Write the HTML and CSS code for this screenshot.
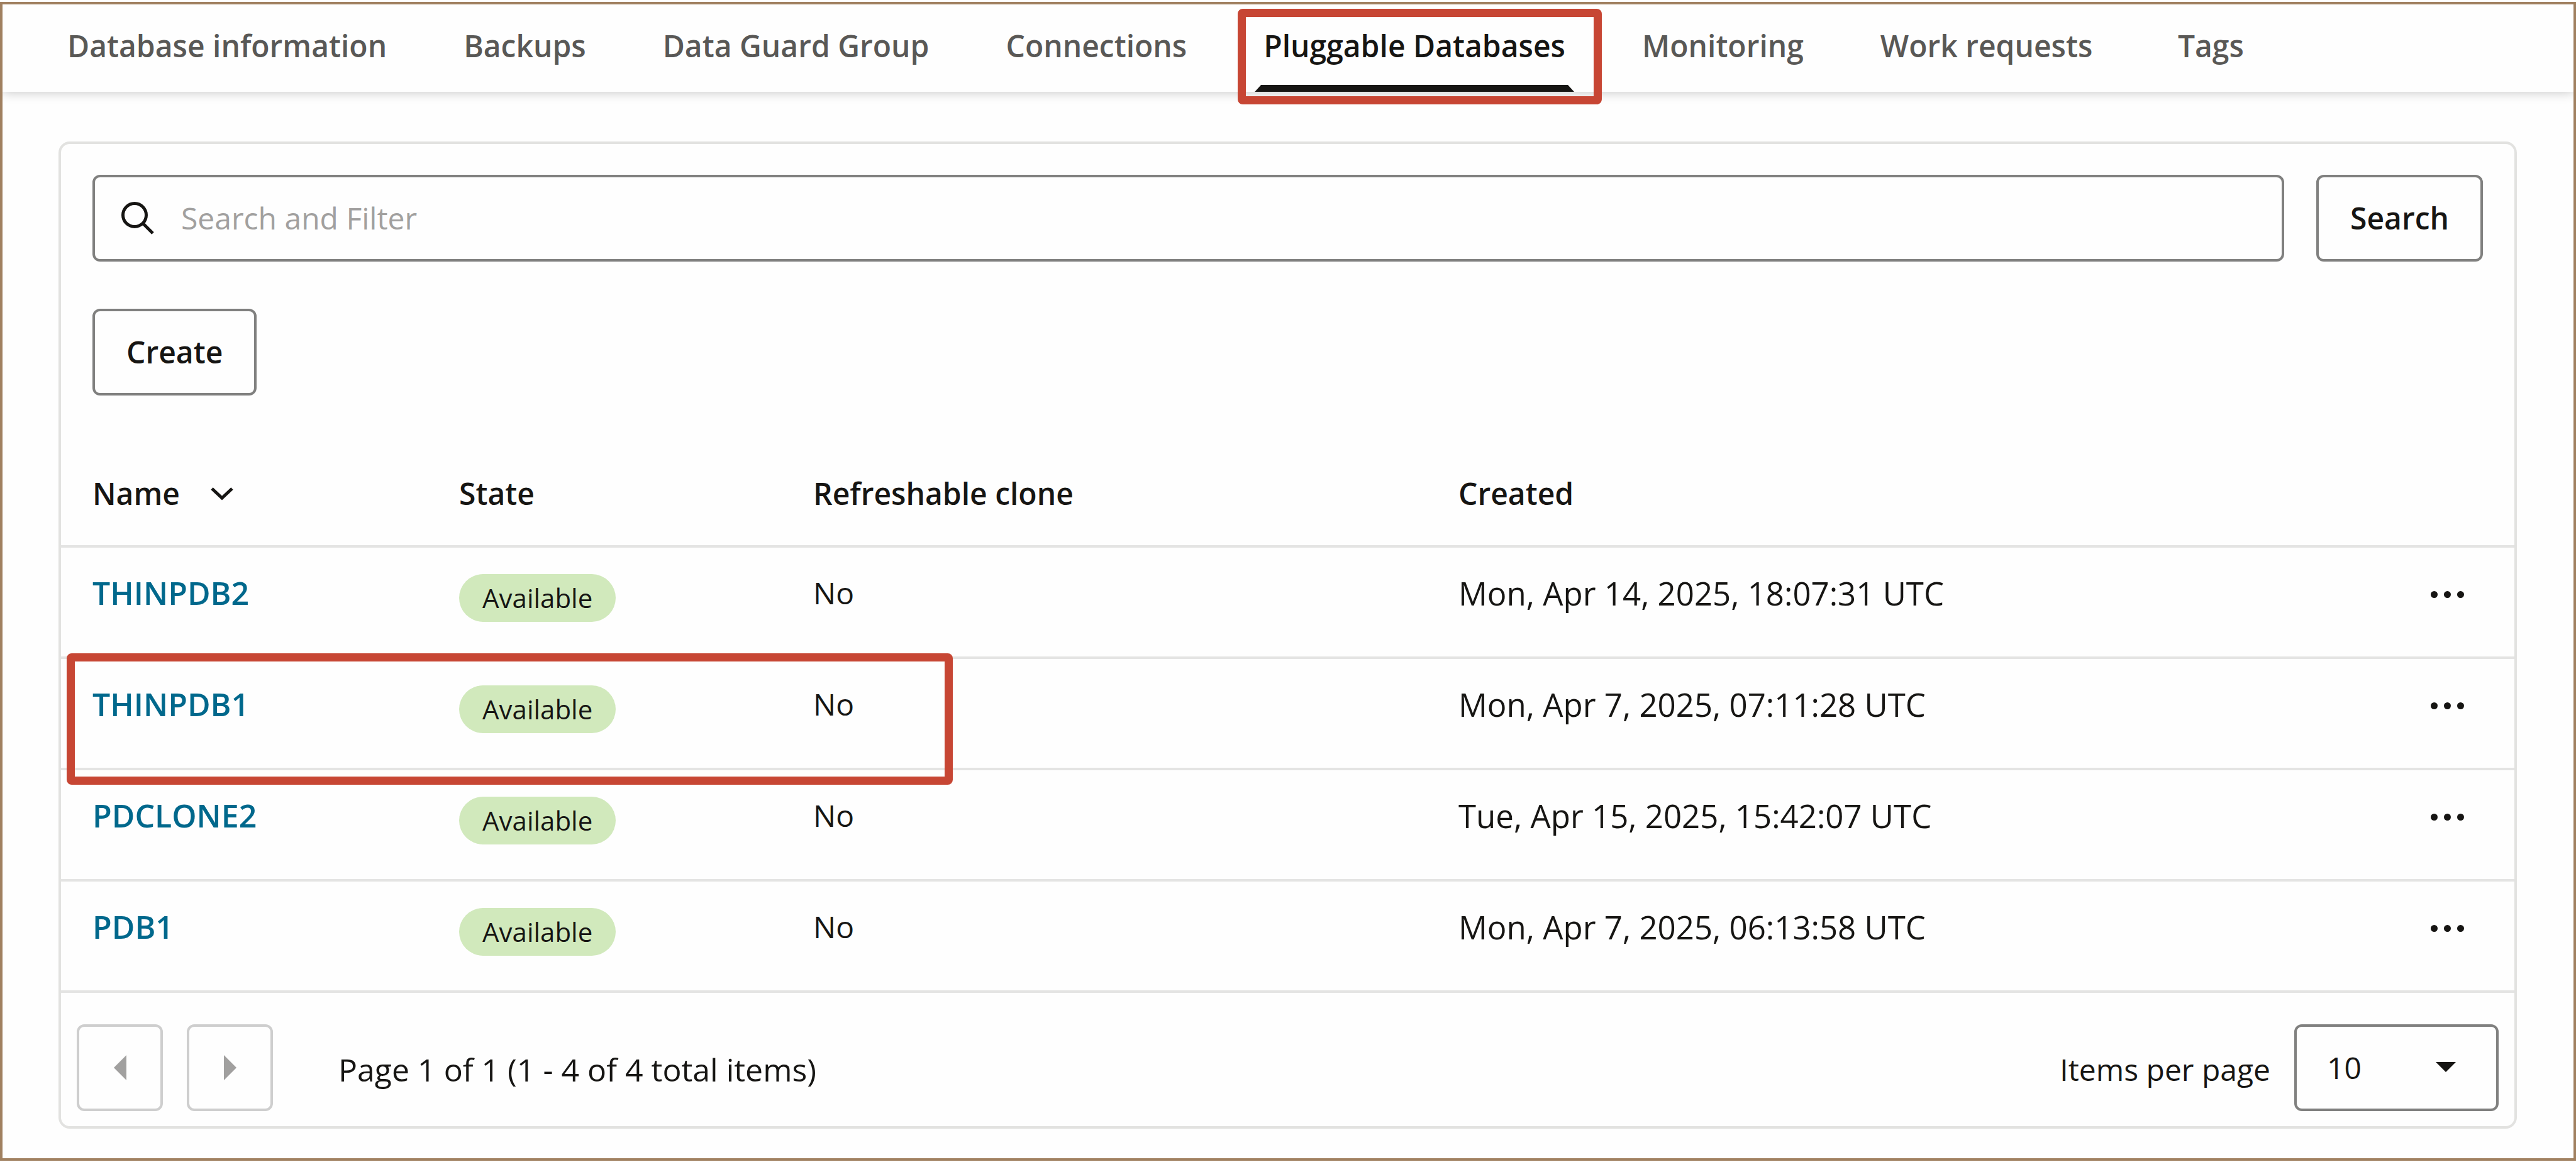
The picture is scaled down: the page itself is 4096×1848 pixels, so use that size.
FILE: index.html
```html
<!DOCTYPE html>
<html lang="en">
<head>
<meta charset="utf-8">
<title>Pluggable Databases</title>
<link rel="stylesheet" href="styles.css">
</head>
<body>
<div class="frame">
  <nav class="tabs" aria-label="Database sections">
    <a class="tab" href="#info">Database information</a>
    <a class="tab" href="#backups">Backups</a>
    <a class="tab" href="#guard">Data Guard Group</a>
    <a class="tab" href="#connections">Connections</a>
    <a class="tab tab-active" href="#pdbs" aria-current="page">Pluggable Databases</a>
    <a class="tab" href="#monitoring">Monitoring</a>
    <a class="tab" href="#requests">Work requests</a>
    <a class="tab" href="#tags">Tags</a>
  </nav>
  <main class="panel">
    <form class="search-row">
      <label class="search-box">
        <svg class="search-icon" viewBox="0 0 52 52" aria-hidden="true"><circle cx="21" cy="21" r="18.500" /><path d="M34 34 50 50" /></svg>
        <input class="search-input" type="text" placeholder="Search and Filter" aria-label="Search and Filter">
      </label>
      <button class="button" type="button">Search</button>
    </form>
    <div class="toolbar"><button class="button" type="button">Create</button></div>
    <table class="grid">
      <colgroup><col class="col-name"><col class="col-state"><col class="col-clone"><col class="col-created"><col class="col-actions"></colgroup>
      <thead>
        <tr>
          <th scope="col"><span class="sortable">Name <svg class="sort-icon" viewBox="0 0 36 22" aria-hidden="true"><path d="M2 3 18 18 34 3" /></svg></span></th>
          <th scope="col">State</th>
          <th scope="col">Refreshable clone</th>
          <th scope="col">Created</th>
          <td></td>
        </tr>
      </thead>
      <tbody>
        <tr>
          <td><a class="name" href="#thinpdb2">THINPDB2</a></td>
          <td><span class="badge">Available</span></td>
          <td>No</td>
          <td class="date">Mon, Apr 14, 2025, 18:07:31 UTC</td>
          <td><button class="more" type="button" aria-label="Actions"><i></i><i></i><i></i></button></td>
        </tr>
        <tr>
          <td class="marked"><a class="name" href="#thinpdb1">THINPDB1</a></td>
          <td><span class="badge">Available</span></td>
          <td>No</td>
          <td class="date">Mon, Apr 7, 2025, 07:11:28 UTC</td>
          <td><button class="more" type="button" aria-label="Actions"><i></i><i></i><i></i></button></td>
        </tr>
        <tr>
          <td><a class="name" href="#pdclone2">PDCLONE2</a></td>
          <td><span class="badge">Available</span></td>
          <td>No</td>
          <td class="date">Tue, Apr 15, 2025, 15:42:07 UTC</td>
          <td><button class="more" type="button" aria-label="Actions"><i></i><i></i><i></i></button></td>
        </tr>
        <tr>
          <td><a class="name" href="#pdb1">PDB1</a></td>
          <td><span class="badge">Available</span></td>
          <td>No</td>
          <td class="date">Mon, Apr 7, 2025, 06:13:58 UTC</td>
          <td><button class="more" type="button" aria-label="Actions"><i></i><i></i><i></i></button></td>
        </tr>
      </tbody>
    </table>
    <footer class="pager">
      <button class="page-button" type="button" aria-label="Previous page" disabled><svg class="page-icon" viewBox="0 0 20 40" aria-hidden="true"><path d="M20 0V40L0 20Z" /></svg></button>
      <button class="page-button" type="button" aria-label="Next page" disabled><svg class="page-icon" viewBox="0 0 20 40" aria-hidden="true"><path d="M0 0V40L20 20Z" /></svg></button>
      <p class="page-status">Page 1 of 1 (1 - 4 of 4 total items)</p>
      <label class="page-label" for="page-size">Items per page</label>
      <div class="select-box">
        <select class="page-size" id="page-size"><option>10</option><option>25</option><option>50</option></select>
        <svg class="select-icon" viewBox="0 0 32 16" aria-hidden="true"><path d="M0 0H32L16 16Z" /></svg>
      </div>
    </footer>
  </main>
</div>
</body>
</html>
```
FILE: styles.css
```css
*,
*::before,
*::after { box-sizing: border-box; }

body {
  margin: 0;
  padding: 3px 0 2px;
  background: #fff;
  color: #161513;
  font: 48px/68px "Open Sans", "Noto Sans", sans-serif;
}

.frame {
  min-height: calc(100vh - 5px);
  padding-bottom: 47px;
  border: 4px solid #a08060;
  background: #fefefe;
}

.tabs {
  display: flex;
  gap: 122px;
  height: 139px;
  padding: 32px 103px 0;
  box-shadow: 0 2px 16px rgba(0, 0, 0, 0.2);
  clip-path: inset(0 0 -24px 0);
}

.tab {
  position: relative;
  min-width: 132px;
  color: #595856;
  font-weight: 600;
  text-align: center;
  text-decoration: none;
  white-space: nowrap;
}

.tab-active { color: #161513; }

.tab-active::before {
  content: "";
  position: absolute;
  inset: 96px -14px auto;
  height: 11px;
  background: #161513;
  clip-path: polygon(10px 0, calc(100% - 10px) 0, 100% 100%, 0 100%);
}

.tab-active::after {
  content: "";
  position: absolute;
  inset: -25px -58px auto -41px;
  height: 152px;
  border: 13px solid #c74634;
  border-radius: 8px;
}

.panel {
  margin: 79px 90px 0 89px;
  border: 4px solid #e2e2e0;
  border-radius: 18px;
}

.search-row {
  display: flex;
  gap: 51px;
  padding: 49px 50px 0;
}

.search-box {
  display: flex;
  flex: 1;
  align-items: center;
  gap: 43px;
  height: 138px;
  padding: 0 42px;
  border: 4px solid #80807f;
  border-radius: 12px;
}

.search-icon {
  width: 52px;
  height: 52px;
  fill: none;
  stroke: #161513;
  stroke-width: 5;
}

.search-input {
  flex: 1;
  padding: 0;
  border: 0;
  outline: 0;
  background: none;
  color: inherit;
  font: inherit;
}

.search-input::placeholder { color: #a1a09f; opacity: 1; }

.button {
  height: 138px;
  padding: 0 50px;
  border: 4px solid #80807f;
  border-radius: 12px;
  background: none;
  color: inherit;
  font: inherit;
  font-weight: 600;
}

.toolbar { padding: 75px 50px 0; }

.grid {
  width: 100%;
  margin-top: 65px;
  border-collapse: separate;
  border-spacing: 0;
  table-layout: fixed;
}

.col-name { width: 633px; }
.col-state { width: 563px; }
.col-clone { width: 1026px; }
.col-actions { width: 300px; }

.grid th,
.grid td {
  height: 177px;
  padding: 38px 0 0;
  border-bottom: 4px solid #e4e4e3;
  text-align: left;
  vertical-align: top;
}

.grid tr > :first-child { padding-left: 50px; }
.grid th { font-weight: 600; padding-top: 57px; }

.sortable {
  display: flex;
  align-items: center;
  gap: 48px;
}

.sort-icon {
  width: 38px;
  height: 22px;
  fill: none;
  stroke: #161513;
  stroke-width: 5;
}

.name {
  color: #00688c;
  font-size: 50px;
  font-weight: 600;
  text-decoration: none;
}

.date { font-size: 51px; }

.badge {
  display: block;
  width: max-content;
  margin-top: 4px;
  padding: 0 37px;
  border-radius: 38px;
  background: #d1e9bc;
  font-size: 42px;
  line-height: 76px;
}

.marked { position: relative; }

/* Outline around the first three cells of the row */
.marked::after {
  content: "";
  position: absolute;
  z-index: 1;
  top: -9px;
  left: 9px;
  width: 1409px;
  height: 209px;
  border: 13px solid #c74634;
  border-radius: 8px;
  pointer-events: none;
}

.more {
  display: flex;
  gap: 10px;
  margin-left: auto;
  margin-right: 80px;
  padding: 31px 0;
  border: 0;
  background: none;
}

.more i {
  width: 11px;
  height: 11px;
  border-radius: 50%;
  background: #161513;
}

.pager {
  display: flex;
  align-items: center;
  gap: 38px;
  padding: 50px 25px 24px;
}

.page-button {
  display: grid;
  place-items: center;
  width: 137px;
  height: 138px;
  padding: 0;
  border: 4px solid #cecece;
  border-radius: 12px;
  background: none;
}

.page-icon {
  width: 20px;
  height: 40px;
  fill: #a1a09f;
}

.page-status {
  flex: 1;
  margin: 6px 0 0 66px;
  font-size: 50px;
}

.page-label { margin-top: 6px; }

.select-box { position: relative; }

.page-size {
  display: block;
  appearance: none;
  width: 325px;
  height: 138px;
  padding: 0 48px;
  border: 4px solid #80807f;
  border-radius: 12px;
  background: none;
  color: inherit;
  font: inherit;
}

.select-icon {
  position: absolute;
  top: 60px;
  right: 68px;
  width: 32px;
  height: 16px;
  fill: #161513;
  pointer-events: none;
}
```
